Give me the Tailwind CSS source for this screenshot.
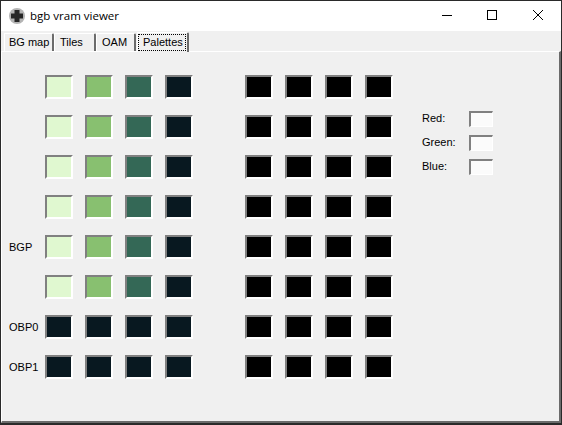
<!DOCTYPE html>
<html lang="en">
<head>
    <meta charset="UTF-8">
    <title>bgb vram viewer</title>
    <script src="https://cdn.jsdelivr.net/npm/@tailwindcss/browser@4"></script>
</head>
<body class="w-[562px] h-[425px] overflow-hidden bg-[#2a2a2a] font-['Liberation_Sans',sans-serif]">
    <div class="mx-[1px] mt-[1px] w-[560px] h-[422px] bg-[#f0f0f0] flex flex-col">
        <!-- title bar -->
        <header class="h-[30px] bg-white flex items-center text-black">
            <svg class="ml-[8px] mt-[-1px] w-[16px] h-[16px]" viewBox="0 0 16 16">
                <circle cx="8" cy="8" r="8" fill="#b4b4b4"/>
                <path d="M5.500 2h5v3.500H14v5h-3.500V14h-5v-3.500H2v-5h3.500z" fill="#262626"/>
            </svg>
            <span class="ml-[5px] text-[11.5px] font-['Open_Sans',sans-serif]">bgb vram viewer</span>
            <div class="ml-auto flex items-center">
                <svg class="w-[46px] h-[30px]" viewBox="0 0 46 30"><path d="M18 14.500h10" stroke="#000" fill="none"/></svg>
                <svg class="w-[46px] h-[30px] ml-[-1px]" viewBox="0 0 46 30"><rect x="18.500" y="9.500" width="9" height="9" stroke="#000" fill="none"/></svg>
                <svg class="w-[46px] h-[30px]" viewBox="0 0 46 30"><path d="M18 9l10 10M28 9L18 19" stroke="#000" fill="none"/></svg>
            </div>
        </header>

        <!-- tabs -->
        <nav class="h-[20px] pl-[3px] flex items-end text-[11px] leading-[14px] text-black whitespace-nowrap">
            <div class="h-[18px] w-[50px] pl-[4px] pt-[1px] border-r-2 border-r-[#6b6b6b] border-t border-l border-white rounded-tr-[2px]">BG map</div>
            <div class="h-[18px] w-[42px] pl-[5px] pt-[1px] border-r-2 border-r-[#6b6b6b] border-t border-l border-white rounded-tr-[2px]">Tiles</div>
            <div class="h-[18px] w-[40px] pl-[5px] pt-[1px] border-r-2 border-r-[#6b6b6b] border-t border-l border-white rounded-tr-[2px]">OAM</div>
            <div class="relative z-10 h-[20px] w-[52px] mb-[-1px] ml-[1px] pt-[1px] bg-[#f0f0f0] border-r-2 border-r-[#6b6b6b] border-t border-l border-white rounded-tr-[2px]">
                <span class="block w-[48px] h-[17px] border border-dotted border-black pl-[4px] leading-[14px]">Palettes</span>
            </div>
        </nav>

        <!-- tab page -->
        <main class="flex-1 border-t border-l border-t-white border-l-white border-r-2 border-b-2 border-r-[#6b6b6b] border-b-[#6b6b6b] pl-[7px] pt-[23px] flex text-[11px] text-black">
            <div id="palettes" class="flex flex-col gap-[16px] w-[413px]"></div>
            <div class="flex flex-col gap-[8px] mt-[36px]">
                <div class="flex items-center h-[16px]">
                    <span class="w-[47px] mt-[-2px]">Red:</span>
                    <span class="w-[24px] h-[16px] bg-[#fbfbfb] border border-t-2 border-l-2 border-t-[#808080] border-l-[#808080] border-r-white border-b-white"></span>
                </div>
                <div class="flex items-center h-[16px]">
                    <span class="w-[47px] mt-[-2px]">Green:</span>
                    <span class="w-[24px] h-[16px] bg-[#fbfbfb] border border-t-2 border-l-2 border-t-[#808080] border-l-[#808080] border-r-white border-b-white"></span>
                </div>
                <div class="flex items-center h-[16px]">
                    <span class="w-[47px] mt-[-2px]">Blue:</span>
                    <span class="w-[24px] h-[16px] bg-[#fbfbfb] border border-t-2 border-l-2 border-t-[#808080] border-l-[#808080] border-r-white border-b-white"></span>
                </div>
            </div>
        </main>
    </div>
    <script>
        // BG and object palettes, left set is filled in, right set is all black
        const green = ['#e0f8d0', '#88c070', '#346856', '#081820'];
        const dark = ['#081820', '#081820', '#081820', '#081820'];
        const black = ['#000', '#000', '#000', '#000'];
        const rows = [
            ['', green], ['', green], ['', green], ['', green],
            ['BGP', green], ['', green], ['OBP0', dark], ['OBP1', dark],
        ];

        const swatches = (colors) => colors.map((c) => `
            <div class="w-[28px] h-[24px] border-2 border-t-[#808080] border-l-[#808080] border-r-white border-b-white" style="background-color: ${c}"></div>
        `).join('');

        document.getElementById('palettes').innerHTML = rows.map(([label, colors]) => `
            <div class="flex h-[24px] items-center">
                <span class="w-[36px]">${label}</span>
                <div class="flex gap-[12px]">${swatches(colors)}</div>
                <div class="flex gap-[12px] ml-[52px]">${swatches(black)}</div>
            </div>
        `).join('');
    </script>
</body>
</html>
